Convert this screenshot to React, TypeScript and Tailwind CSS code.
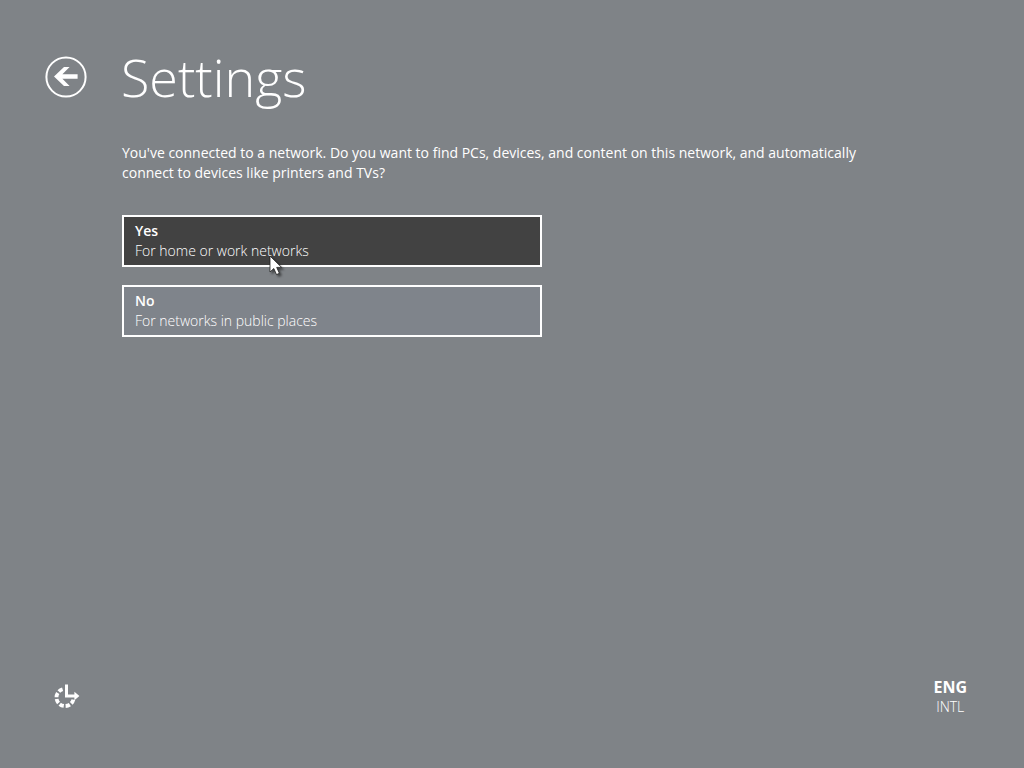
import { useState } from "react";

const choices = [
  { id: "yes", title: "Yes", detail: "For home or work networks" },
  { id: "no", title: "No", detail: "For networks in public places" },
];

function BackIcon() {
  return (
    <svg viewBox="0 0 42 42" className="h-[42px] w-[42px]" aria-hidden="true">
      <circle cx="21" cy="21" r="19.6" fill="none" stroke="#fff" strokeWidth="2" />
      <path d="M9 20.5 19 11H24.6L17.4 18.2H32.6V22.8H17.4L24.6 30H19Z" fill="#fff" />
    </svg>
  );
}

function EaseOfAccessIcon() {
  return (
    <svg viewBox="0 0 28 28" className="h-7 w-7" aria-hidden="true">
      <path
        d="M9.6 6.2A8.6 8.6 0 1 0 20.4 16.6"
        fill="none"
        stroke="#fff"
        strokeWidth="3.8"
        strokeDasharray="4.4 1.8"
      />
      <path d="M13.5 1.5V13H22" fill="none" stroke="#fff" strokeWidth="3" />
      <path d="M21.4 8.8 26.4 13 21.4 17.2Z" fill="#fff" />
    </svg>
  );
}

function Pointer() {
  return (
    <svg
      viewBox="0 0 16 24"
      className="pointer-events-none absolute top-10 left-[147px] h-6 w-4 drop-shadow-[2px_2px_1px_rgba(0,0,0,0.5)]"
      aria-hidden="true"
    >
      <path
        d="M1 1V17L4.8 13.5 7.5 19.6 10.4 18.3 7.7 12.4H12.6Z"
        fill="#fff"
        stroke="#222"
        strokeWidth="0.8"
      />
    </svg>
  );
}

export default function App() {
  const [hovered, setHovered] = useState("yes");

  return (
    <div className="flex min-h-screen flex-col bg-[#7f8387] px-[45px] pt-12 pb-[51px] font-['Open_Sans','Noto_Sans',sans-serif] text-sm leading-5 text-white">
      <header className="flex items-center gap-[34px]">
        <button type="button" aria-label="Back" className="rounded-full">
          <BackIcon />
        </button>
        <h1 className="text-[52px] leading-[58px] font-light">Settings</h1>
      </header>

      <main className="mt-[37px] flex-1 pl-[77px]">
        <p className="max-w-[760px]">
          You've connected to a network. Do you want to find PCs, devices, and content on this
          network, and automatically connect to devices like printers and TVs?
        </p>
        <div className="mt-8 flex max-w-[420px] flex-col gap-[18px]">
          {choices.map((c) => (
            <div key={c.id} className="relative">
              <button
                type="button"
                onMouseEnter={() => setHovered(c.id)}
                className={`block w-full border-2 border-white px-[11px] py-1 text-left ${
                  hovered === c.id ? "bg-[#424242]" : "bg-[#7f848b]"
                }`}
              >
                <span className="block font-semibold">{c.title}</span>
                <span className="block font-light">{c.detail}</span>
              </button>
              {hovered === c.id && <Pointer />}
            </div>
          ))}
        </div>
      </main>

      <footer className="flex items-center justify-between pr-3 pl-2">
        <button type="button" aria-label="Ease of access">
          <EaseOfAccessIcon />
        </button>
        <button type="button" className="text-center">
          <span className="block text-base leading-5 font-bold">ENG</span>
          <span className="block font-light">INTL</span>
        </button>
      </footer>
    </div>
  );
}
